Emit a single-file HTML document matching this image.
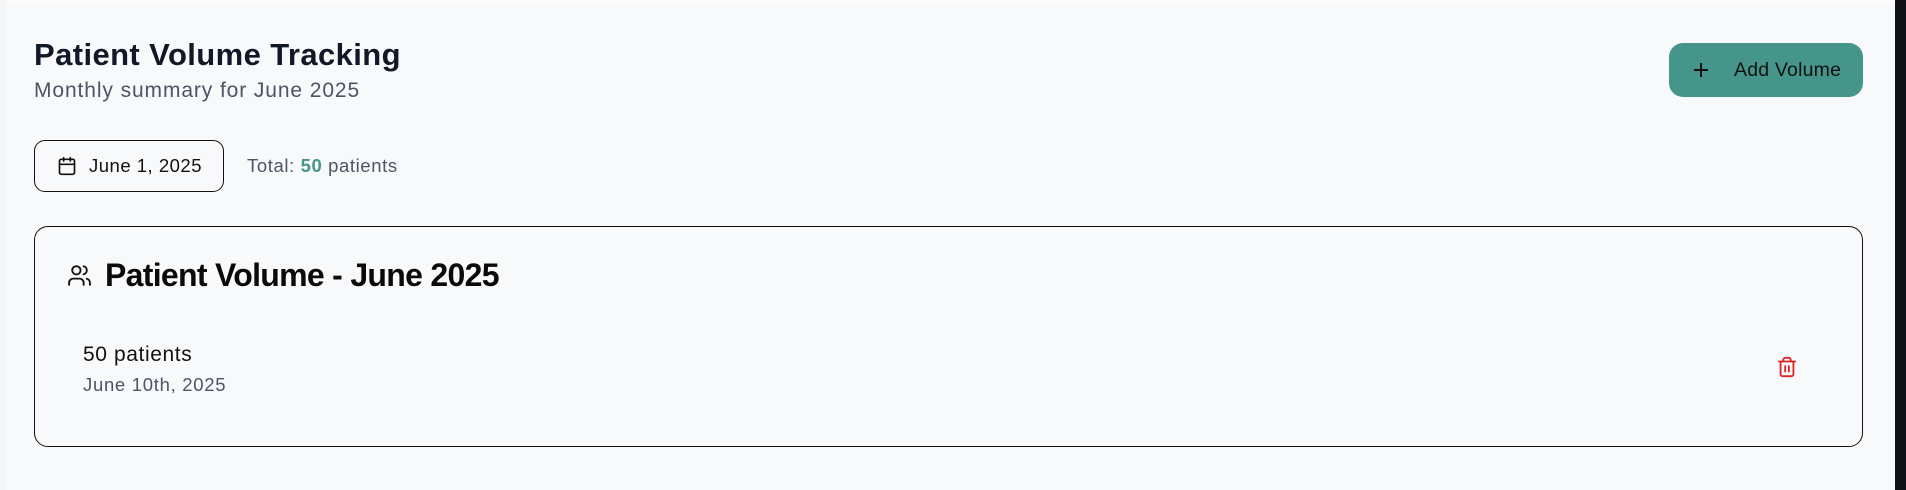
<!DOCTYPE html>
<html><head><meta charset="utf-8"><style>
*{box-sizing:border-box;margin:0;padding:0}
body{width:1906px;height:490px;background:#f8f9fb;font-family:"Liberation Sans",sans-serif;position:relative;overflow:hidden}
.a{position:absolute;white-space:nowrap}
</style></head><body>
<div class="a" style="left:0;top:0;width:1895px;height:3px;background:#fdfdfe"></div>
<div class="a" style="left:0;top:0;width:7px;height:490px;background:#f4f5f7"></div>
<div class="a" style="left:1895px;top:0;width:11px;height:490px;background:#111118"></div>

<div class="a" style="left:34px;top:37px;font-size:31px;font-weight:bold;color:#111827;letter-spacing:0.4px">Patient Volume Tracking</div>
<div class="a" style="left:34px;top:79px;font-size:21px;color:#4b5563;letter-spacing:0.9px">Monthly summary for June 2025</div>

<div class="a" style="left:1669px;top:43px;width:194px;height:54px;background:#45958a;border-radius:14px"></div>
<svg class="a" style="left:1691px;top:60px" width="20" height="20" viewBox="0 0 20 20"><path d="M10 3v14M3 10h14" stroke="#111" stroke-width="2" fill="none"/></svg>
<div class="a" style="left:1734px;top:59px;font-size:19.5px;font-weight:500;color:#111;letter-spacing:0.2px">Add Volume</div>

<div class="a" style="left:34px;top:140px;width:190px;height:52px;border:1.3px solid #111;border-radius:11px"></div>
<svg class="a" style="left:57px;top:156px" width="20" height="20" viewBox="0 0 24 24" fill="none" stroke="#111" stroke-width="2" stroke-linecap="round"><rect x="3" y="4" width="18" height="18" rx="2"/><path d="M16 2v4M8 2v4M3 10h18"/></svg>
<div class="a" style="left:89px;top:155px;font-size:18.5px;font-weight:500;color:#111;letter-spacing:0.5px">June 1, 2025</div>
<div class="a" style="left:247px;top:155px;font-size:18.5px;color:#4b5563;letter-spacing:0.6px">Total: <b style="color:#45958a">50</b> patients</div>

<div class="a" style="left:34px;top:226px;width:1829px;height:221px;border:1.3px solid #111;border-radius:14px"></div>
<svg class="a" style="left:67px;top:263px" width="25" height="25" viewBox="0 0 24 24" fill="none" stroke="#111" stroke-width="1.8" stroke-linecap="round"><path d="M16 21v-2a4 4 0 0 0-4-4H6a4 4 0 0 0-4 4v2"/><circle cx="9" cy="7" r="4"/><path d="M22 21v-2a4 4 0 0 0-3-3.87M16 3.13a4 4 0 0 1 0 7.75"/></svg>
<div class="a" style="left:105px;top:257px;font-size:32px;font-weight:bold;color:#0a0a0a;letter-spacing:-0.7px">Patient Volume - June 2025</div>
<div class="a" style="left:83px;top:343px;font-size:21px;font-weight:500;color:#111;letter-spacing:0.6px">50 patients</div>
<div class="a" style="left:83px;top:374px;font-size:18.5px;color:#4b5563;letter-spacing:0.7px">June 10th, 2025</div>
<svg class="a" style="left:1776px;top:356px" width="22" height="22" viewBox="0 0 24 24" fill="none" stroke="#dc2626" stroke-width="2" stroke-linecap="round"><path d="M3 6h18M19 6v14a2 2 0 0 1-2 2H7a2 2 0 0 1-2-2V6M8 6V4a2 2 0 0 1 2-2h4a2 2 0 0 1 2 2v2M10 11v6M14 11v6"/></svg>
</body></html>
